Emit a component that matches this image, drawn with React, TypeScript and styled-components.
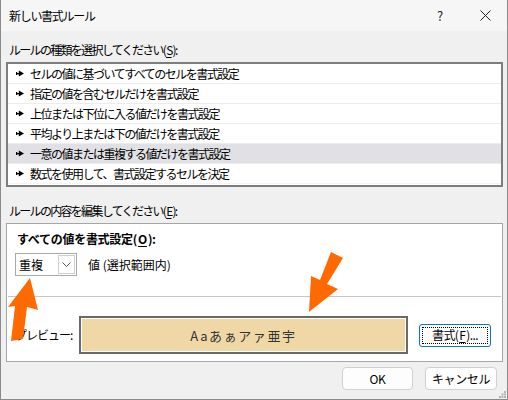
import React from 'react';
import styled, { createGlobalStyle } from 'styled-components';

const GlobalStyle = createGlobalStyle`
  html, body {
    margin: 0;
    padding: 0;
    background: #f0f0f0;
  }
  * {
    box-sizing: border-box;
  }
`;

const FONT = `"Noto Sans CJK JP", "Noto Sans", sans-serif`;

const Window = styled.div`
  position: relative;
  width: 508px;
  height: 400px;
  border: 1px solid #8a8a8a;
  border-top: none;
  background: #f0f0f0;
  font-family: ${FONT};
  font-size: 12px;
  letter-spacing: -1.3px;
  color: #000;
  display: flex;
  flex-direction: column;
  overflow: hidden;
`;

const TitleBar = styled.div`
  height: 31px;
  flex: none;
  background: #f6f6f6;
  display: flex;
  align-items: center;
  padding-left: 8px;
`;

const Title = styled.div`
  flex: 1;
  line-height: 16px;
`;

const TitleButton = styled.div<{ $width: number }>`
  width: ${p => p.$width}px;
  height: 31px;
  display: flex;
  align-items: center;
  justify-content: center;
  font-size: 13px;
  letter-spacing: 0;
  color: #222;
`;

const Body = styled.div`
  flex: 1;
  display: flex;
  flex-direction: column;
  padding: 0 4px 0 5px;
`;

const SectionLabel = styled.div<{ $top: number }>`
  margin-top: ${p => p.$top}px;
  margin-bottom: 4px;
  height: 16px;
  line-height: 16px;
  padding-left: 3px;
  letter-spacing: -1.7px;
`;

const U = styled.span`
  text-decoration: underline;
  text-underline-offset: 2px;
  padding: 0 1px;
`;

const ListBox = styled.div`
  border: 2px solid #7d7d7d;
  background: #fff;
  padding-bottom: 1px;
`;

const Row = styled.div<{ $selected?: boolean }>`
  height: 20px;
  display: flex;
  align-items: center;
  padding-left: 8px;
  gap: 6px;
  border-bottom: 1px solid #ececec;
  background: ${p => (p.$selected ? '#e1e1e5' : '#fff')};
  &:last-child {
    border-bottom-color: #f4f4f4;
  }
`;

const RowText = styled.span`
  line-height: 16px;
  padding-top: 1px;
  letter-spacing: -1.5px;
`;

const ContentBox = styled.div`
  height: 139px;
  border: 1px solid #a6a6a6;
  background: #fff;
  display: flex;
  flex-direction: column;
`;

const TopArea = styled.div`
  padding: 7px 9px 0 9px;
  height: 72px;
`;

const BoldLabel = styled.div`
  font-weight: 700;
  line-height: 16px;
  height: 16px;
  padding-left: 1px;
  letter-spacing: -0.3px;
`;

const SelectRow = styled.div`
  margin-top: 6px;
  display: flex;
  align-items: center;
  gap: 11px;
  margin-left: -1px;
`;

const Select = styled.div`
  width: 62px;
  height: 23px;
  border: 1px solid #a9a9a9;
  background: #fff;
  display: flex;
  align-items: center;
  justify-content: space-between;
  padding: 1px 0 1px 3px;
`;

const SelectValue = styled.span`
  line-height: 16px;
  letter-spacing: 0;
`;

const SelectButton = styled.div`
  width: 17px;
  height: 19px;
  border: 1px solid #cfcfcf;
  margin-right: 1px;
  display: flex;
  align-items: center;
  justify-content: center;
`;

const RangeText = styled.span`
  letter-spacing: 0;
  line-height: 16px;
`;

const Divider = styled.div`
  height: 1px;
  background: #c6c6c6;
  margin: 0 1px;
`;

const PreviewRow = styled.div`
  display: flex;
  align-items: center;
  padding: 19px 11px 0 8px;
`;

const PreviewLabel = styled.div`
  width: 64px;
  line-height: 16px;
  letter-spacing: -1px;
`;

const PreviewBox = styled.div`
  width: 329px;
  height: 38px;
  border: 2px solid #6a6a6a;
  background: #fff;
  padding: 1px;
`;

const PreviewFill = styled.div`
  height: 100%;
  background: #f0d8a6;
  display: flex;
  align-items: center;
  justify-content: center;
  font-size: 13px;
  letter-spacing: 1.6px;
  color: #333;
`;

const FormatButton = styled.div`
  margin-left: auto;
  width: 72px;
  height: 23px;
  border: 1px solid #0a74d0;
  border-radius: 3px;
  background: #fdfdfd;
  padding: 2px;
`;

const FocusRect = styled.div`
  height: 100%;
  border: 1px dotted #000;
  display: flex;
  align-items: center;
  justify-content: center;
  line-height: 16px;
  letter-spacing: -0.6px;
`;

const Footer = styled.div`
  display: flex;
  justify-content: flex-end;
  gap: 12px;
  padding: 5px 6px 0 0;
`;

const DialogButton = styled.div<{ $width: number }>`
  width: ${p => p.$width}px;
  height: 23px;
  border: 1px solid #d0d0d0;
  border-radius: 4px;
  background: #fdfdfd;
  display: flex;
  align-items: center;
  justify-content: center;
  line-height: 16px;
  letter-spacing: -0.4px;
`;

const Grip = styled.svg`
  position: absolute;
  right: 1px;
  bottom: 1px;
`;

const Overlay = styled.svg`
  position: absolute;
  left: 0;
  top: 0;
  pointer-events: none;
`;

const Bullet = () => (
  <svg width="8" height="7" viewBox="0 0 8 7">
    <rect x="0" y="2" width="1.2" height="3" fill="#000" />
    <rect x="0" y="3" width="4" height="1.3" fill="#000" />
    <path d="M2.8 0.6 L8 3.6 L2.8 6.4 Z" fill="#000" />
  </svg>
);

const rules = [
  'セルの値に基づいてすべてのセルを書式設定',
  '指定の値を含むセルだけを書式設定',
  '上位または下位に入る値だけを書式設定',
  '平均より上または下の値だけを書式設定',
  '一意の値または重複する値だけを書式設定',
  '数式を使用して、書式設定するセルを決定',
];

export default function App() {
  return (
    <>
      <GlobalStyle />
      <Window>
        <TitleBar>
          <Title>新しい書式ルール</Title>
          <TitleButton $width={46}>?</TitleButton>
          <TitleButton $width={44}>
            <svg width="11" height="11" viewBox="0 0 11 11">
              <path d="M0.5 0.5 L10.5 10.5 M10.5 0.5 L0.5 10.5" stroke="#222" strokeWidth="1" />
            </svg>
          </TitleButton>
        </TitleBar>
        <Body>
          <SectionLabel $top={11}>
            ルールの種類を選択してください(<U>S</U>):
          </SectionLabel>
          <ListBox>
            {rules.map((r, i) => (
              <Row key={r} $selected={i === 4}>
                <Bullet />
                <RowText>{r}</RowText>
              </Row>
            ))}
          </ListBox>
          <SectionLabel $top={16}>
            ルールの内容を編集してください(<U>E</U>):
          </SectionLabel>
          <ContentBox>
            <TopArea>
              <BoldLabel>
                すべての値を書式設定(<U>O</U>):
              </BoldLabel>
              <SelectRow>
                <Select>
                  <SelectValue>重複</SelectValue>
                  <SelectButton>
                    <svg width="9" height="5" viewBox="0 0 9 5">
                      <path d="M0.5 0.5 L4.5 4.5 L8.5 0.5" stroke="#555" strokeWidth="1" fill="none" />
                    </svg>
                  </SelectButton>
                </Select>
                <RangeText>値 (選択範囲内)</RangeText>
              </SelectRow>
            </TopArea>
            <Divider />
            <PreviewRow>
              <PreviewLabel>プレビュー:</PreviewLabel>
              <PreviewBox>
                <PreviewFill>Aaあぁアァ亜宇</PreviewFill>
              </PreviewBox>
              <FormatButton>
                <FocusRect>
                  書式(<U>F</U>)...
                </FocusRect>
              </FormatButton>
            </PreviewRow>
          </ContentBox>
          <Footer>
            <DialogButton $width={71}>OK</DialogButton>
            <DialogButton $width={72}>キャンセル</DialogButton>
          </Footer>
        </Body>
        <Grip width="7" height="7" viewBox="0 0 7 7">
          <rect x="5" y="0" width="2" height="2" fill="#b4b4b4" />
          <rect x="2.5" y="2.5" width="2" height="2" fill="#b4b4b4" />
          <rect x="5" y="2.5" width="2" height="2" fill="#b4b4b4" />
          <rect x="0" y="5" width="2" height="2" fill="#b4b4b4" />
          <rect x="2.5" y="5" width="2" height="2" fill="#b4b4b4" />
          <rect x="5" y="5" width="2" height="2" fill="#b4b4b4" />
        </Grip>
        <Overlay width="508" height="400" viewBox="0 0 508 400">
          <polygon
            points="29,278 37,310 26,307 22,339 10,341 14,306 7,307"
            fill="#ff6a00"
          />
          <polygon
            points="330,252 342,258 326,284 337,289 308,312 310,276 319,280"
            fill="#ff6a00"
          />
        </Overlay>
      </Window>
    </>
  );
}
